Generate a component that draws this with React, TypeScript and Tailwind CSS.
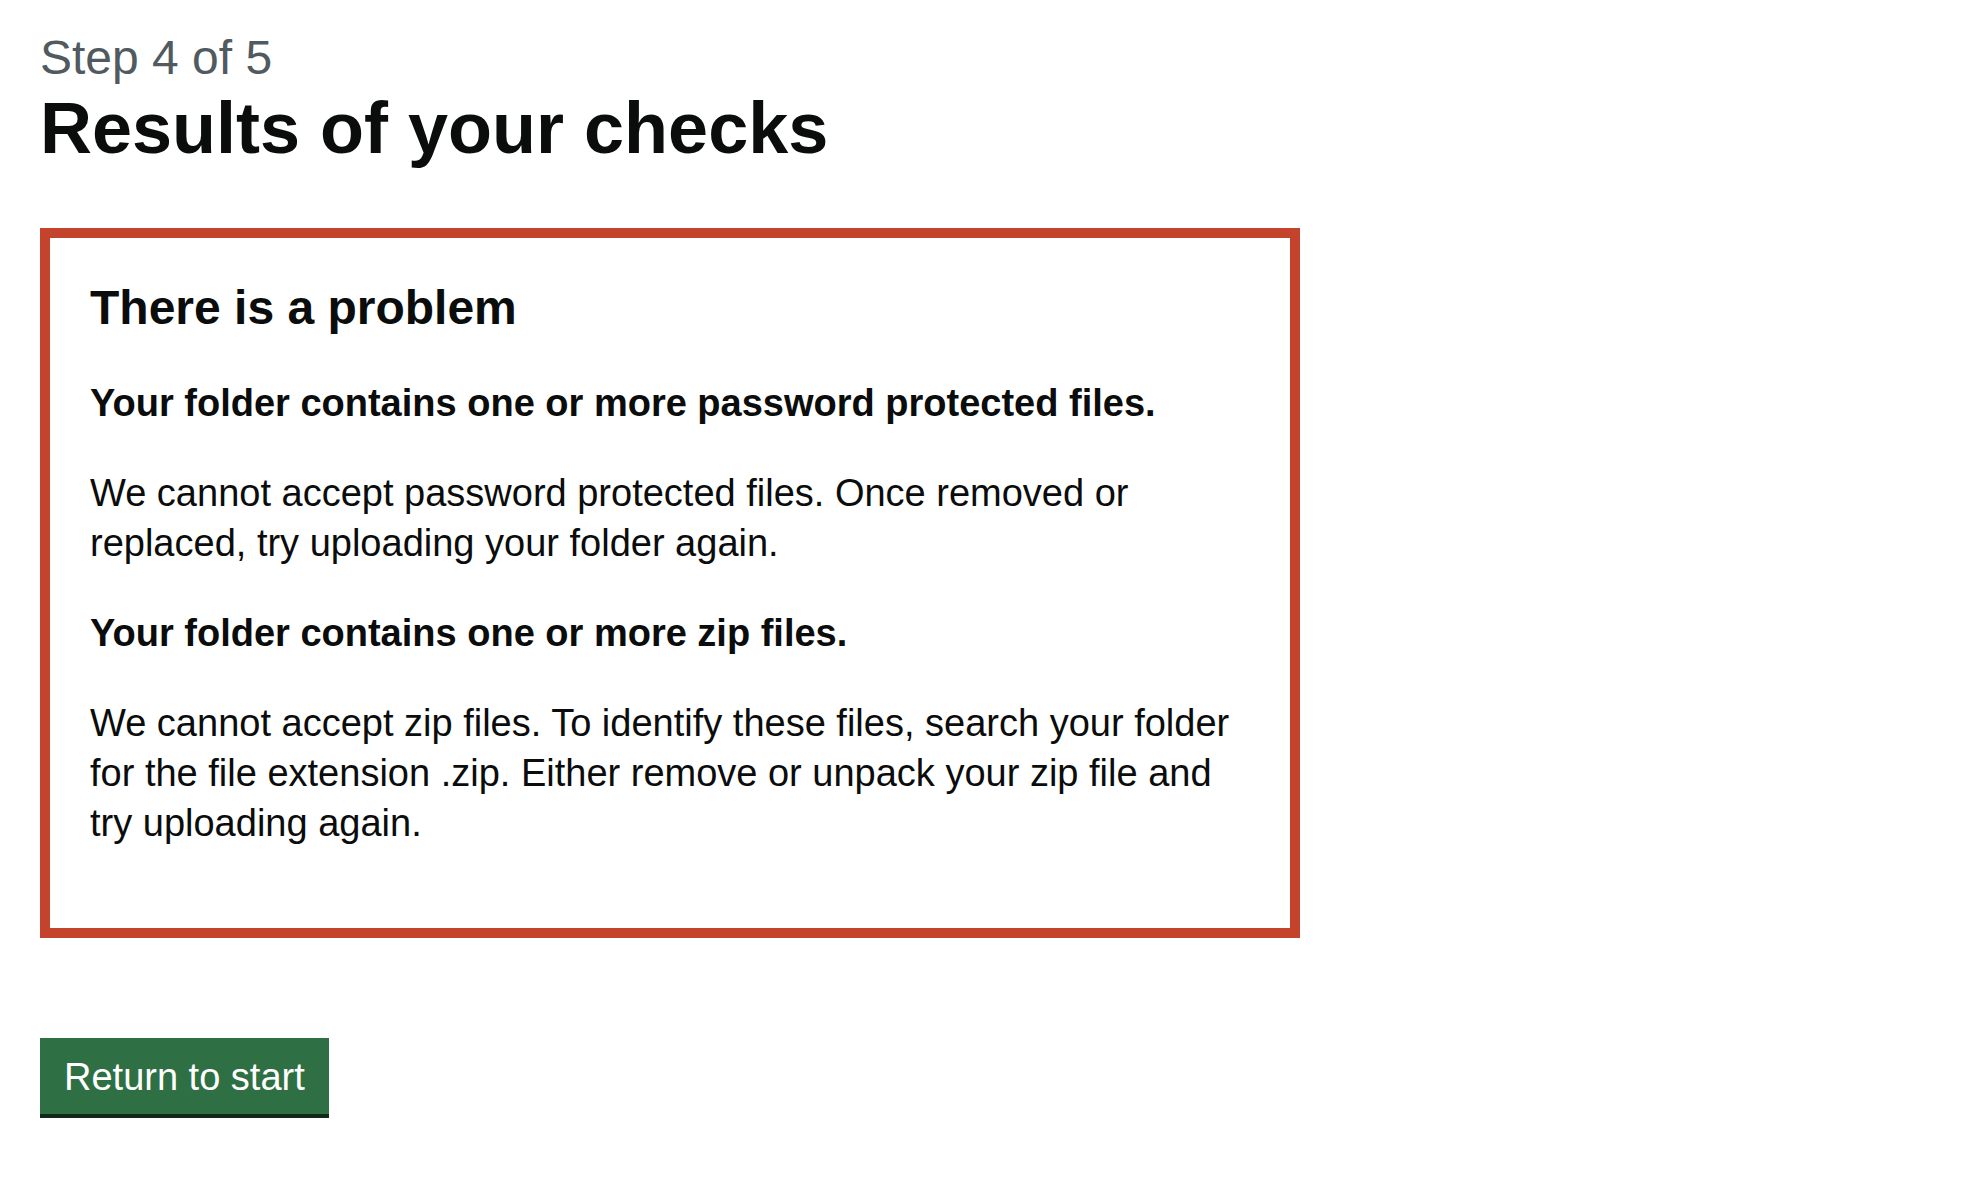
const problems = [
  {
    title: "Your folder contains one or more password protected files.",
    body: "We cannot accept password protected files. Once removed or replaced, try uploading your folder again.",
  },
  {
    title: "Your folder contains one or more zip files.",
    body: "We cannot accept zip files. To identify these files, search your folder for the file extension .zip. Either remove or unpack your zip file and try uploading again.",
  },
];

const App = () => {
  return (
    <div
      className="min-h-screen bg-white px-[40px] pt-[28px] text-[#0b0c0c]"
      style={{ fontFamily: '"Liberation Sans", Arial, Helvetica, sans-serif' }}
    >
      <span className="block text-[48px] leading-[60px] text-[#505a5f]">Step 4 of 5</span>
      <h1 className="mb-[60px] text-[72px] font-bold leading-[80px]">Results of your checks</h1>

      <div className="mb-[100px] w-[1260px] border-[10px] border-[#c4432c] p-[40px]">
        <h2 className="mb-[40px] text-[48px] font-bold leading-[60px]">There is a problem</h2>
        {problems.map((p) => (
          <div key={p.title}>
            <p className="mb-[40px] text-[38px] font-bold leading-[50px]">{p.title}</p>
            <p className="mb-[40px] text-[38px] leading-[50px]">{p.body}</p>
          </div>
        ))}
      </div>

      <button
        type="button"
        className="border-[4px] border-transparent bg-[#2f6f44] px-[20px] pt-[16px] pb-[14px] text-[38px] leading-[38px] text-white shadow-[0_4px_0_#0f2a17]"
      >
        Return to start
      </button>
    </div>
  );
};

export default App;
